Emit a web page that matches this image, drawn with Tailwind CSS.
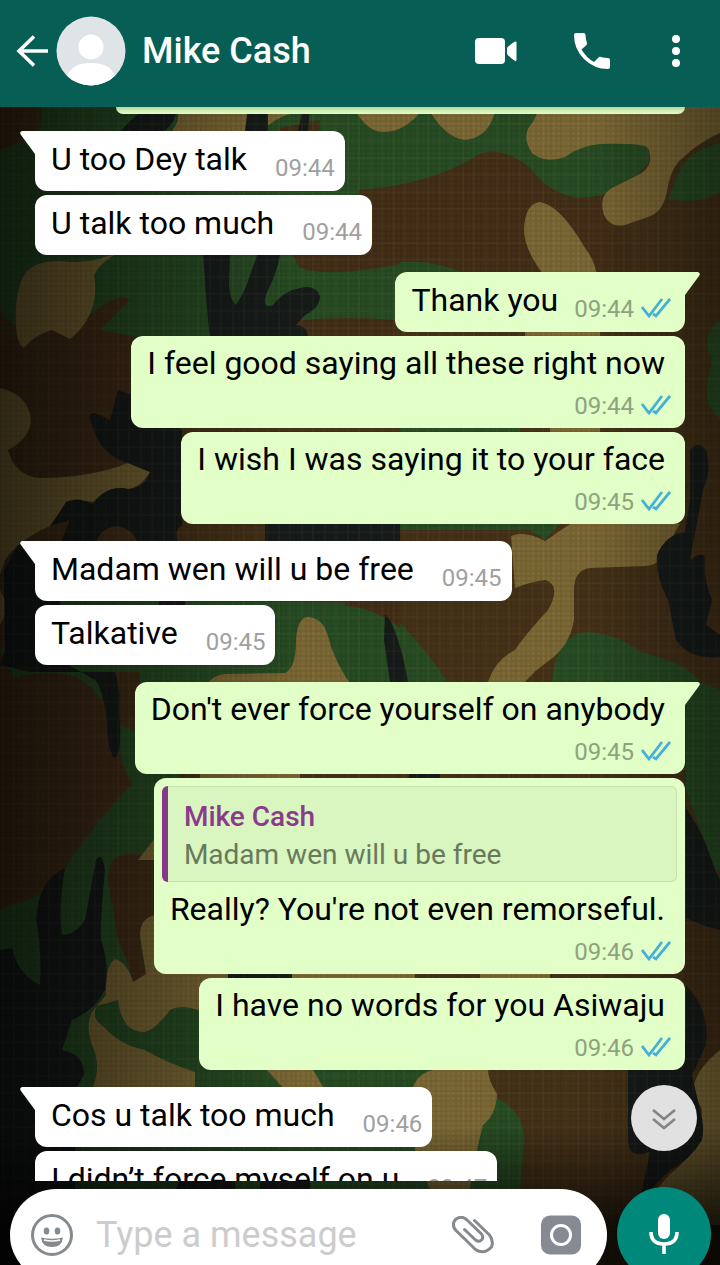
<!DOCTYPE html>
<html lang="en">
<head>
    <meta charset="UTF-8">
    <meta name="viewport" content="width=device-width, initial-scale=1.0">
    <title>Mike Cash</title>
    <script src="https://cdn.jsdelivr.net/npm/@tailwindcss/browser@4"></script>
</head>
<body class="font-[Roboto,sans-serif] bg-[#10180c] text-black">
    <!-- Tick and tail shapes shared by the bubbles -->
    <svg class="hidden">
        <symbol id="ticks" viewBox="0 0 30 22">
            <path d="M1 9 L8 18 L21 1 M12 16 L15 18 L29 1" fill="none" stroke="#45b0d5" stroke-width="2.8"/>
        </symbol>
        <symbol id="tail-in" viewBox="0 0 16 24">
            <path d="M16 0 H3 Q0 1 2 4 L16 23 Z" fill="#fff"/>
        </symbol>
        <symbol id="tail-out" viewBox="0 0 16 24">
            <path d="M0 0 H13 Q16 1 14 4 L0 23 Z" fill="#e1ffc7"/>
        </symbol>
    </svg>

    <div class="h-screen flex flex-col overflow-hidden">
        <header class="h-[107px] shrink-0 bg-[#075e54] flex items-center pl-4 pr-6 pb-[5px] text-white">
            <button aria-label="Back" class="w-10 shrink-0">
                <svg class="w-8 h-8" viewBox="0 0 32 32" fill="none" stroke="#fff" stroke-width="3.6"><path d="M32 16 H3 M18 1.5 L3 16 L18 30.5"/></svg>
            </button>
            <svg class="w-[70px] h-[70px] shrink-0" viewBox="0 0 70 70">
                <defs><clipPath id="face"><circle cx="35" cy="35" r="34.5"/></clipPath></defs>
                <g clip-path="url(#face)">
                    <rect width="70" height="70" fill="#dfe5e7"/>
                    <circle cx="35" cy="31" r="12.5" fill="#fff"/>
                    <path d="M11 60 Q16 47 35 47 Q54 47 59 60 V70 H11 Z" fill="#fff"/>
                </g>
            </svg>
            <h1 class="flex-1 pl-4 text-[36px] leading-10 font-medium">Mike Cash</h1>
            <div class="flex items-center">
                <button aria-label="Video call" class="w-[42px] mr-[57px]">
                    <svg class="w-[42px] h-[26px]" viewBox="0 0 42 26" fill="#fff"><rect width="30" height="26" rx="4"/><path d="M32 10 Q33 8 40 3.5 Q41.500 3 41.500 4.500 V22 Q41.500 23.500 40 23 Q33 18 32 16 Z"/></svg>
                </button>
                <button aria-label="Voice call" class="w-9 mr-[54px]">
                    <svg class="w-9 h-9" viewBox="0 0 36 36" fill="#fff"><path d="M2 0 H9.500 Q11.500 0 11.500 2 Q11.500 6 13 10 Q13 11.500 12 12.500 L7.500 16.500 Q12.500 25 20 29 L24.500 24.500 Q25.500 23.500 27 24 Q30 25 34 25 Q36 25 36 27 V34 Q36 36 34 36 Q20 36 10 26 Q0 16 0 2 Q0 0 2 0 Z"/></svg>
                </button>
                <button aria-label="Menu" class="w-8 flex justify-center">
                    <svg class="w-8 h-8" viewBox="0 0 32 32" fill="#fff"><circle cx="12" cy="4" r="4"/><circle cx="12" cy="16" r="4"/><circle cx="12" cy="28" r="4"/></svg>
                </button>
            </div>
        </header>

        <div class="relative isolate flex-1 min-h-0 flex flex-col">
            <!-- Camouflage wallpaper -->
            <svg class="absolute inset-0 w-full h-full -z-10" viewBox="0 107 720 1158" preserveAspectRatio="xMidYMid slice">
                <defs>
                    <pattern id="weave" width="5" height="5" patternUnits="userSpaceOnUse">
                        <path d="M0 1 H5 M1 0 V5" stroke="#000" stroke-opacity=".09" stroke-width="1.4"/>
                    </pattern>
                    <pattern id="threads" width="23" height="17" patternUnits="userSpaceOnUse">
                        <path d="M3 0 V17 M14 0 V17 M0 5 H23" stroke="#c8b070" stroke-opacity=".05" stroke-width="1.5"/>
                    </pattern>
                    <linearGradient id="side">
                        <stop offset="0" stop-color="#000" stop-opacity=".62"/>
                        <stop offset=".17" stop-color="#000" stop-opacity=".36"/>
                        <stop offset=".42" stop-color="#000" stop-opacity="0"/>
                        <stop offset=".82" stop-color="#000" stop-opacity="0"/>
                        <stop offset="1" stop-color="#000" stop-opacity=".35"/>
                    </linearGradient>
                    <linearGradient id="floor" x1="0" y1="0" x2="0" y2="1">
                        <stop offset=".88" stop-color="#000" stop-opacity="0"/>
                        <stop offset=".97" stop-color="#000" stop-opacity=".75"/>
                    </linearGradient>
                </defs>
                <rect y="107" width="720" height="1158" fill="#453118"/>
                <g fill="#274c23">
                    <path d="M0 107 H720 V143 Q690 150 680 170 L668 199 Q700 205 720 192 V130 L650 143 Q655 165 630 180 Q610 198 575 198 Q545 190 530 168 Q500 145 480 154 Q430 185 360 190 L340 255 L296 262 Q300 275 396 262 Q430 258 470 275 L500 320 L300 320 Q240 330 210 345 L140 345 Q100 320 60 340 Q20 340 0 310 Z"/>
                    <path d="M380 603 Q420 640 448 682 H400 L130 700 L20 690 L0 650 L60 600 Z"/>
                    <path d="M552 682 Q556 632 590 632 Q620 635 640 652 Q690 664 700 682 L720 690 V870 L715 872 Q690 800 686 790 V682 Z"/>
                    <path d="M120 725 Q116 760 132 783 L100 820 Q70 860 40 895 L0 910 V1200 H430 V1060 L280 960 L160 740 Z"/>
                    <path d="M495 1097 Q524 1110 524 1140 L520 1190 H300 V1147 H470 Z M720 320 Q705 330 708 350 L712 360 Q702 400 712 410 L720 420 Z M340 524 L560 524 L545 540 L530 530 L340 530 Z M400 428 H520 V434 H400 Z"/>
                </g>
                <g fill="#432e17">
                    <path d="M0 107 H40 Q44 122 34 138 Q15 144 0 150 Z M290 250 H400 V264 Q330 278 300 268 Z M300 320 Q350 316 396 320 V338 H300 Z"/>
                    <path d="M360 190 Q430 185 470 160 Q500 142 530 168 Q545 190 575 198 Q605 198 630 190 V275 H470 Q430 258 396 262 L340 258 Z"/>
                    <path d="M0 345 L90 315 Q120 290 130 300 L100 330 L180 345 V440 L110 470 L30 478 L0 455 Z"/>
                    <path d="M0 685 Q30 668 70 675 Q98 685 103 710 Q110 755 132 785 Q110 800 90 825 Q75 850 60 878 Q30 895 0 908 Z M115 672 L140 672 V712 Q125 725 118 720 Z M108 880 Q108 853 130 854 H155 V915 Q140 918 140 940 L146 976 L133 982 Q128 960 118 940 Z"/>
                    <path d="M345 600 H400 V628 Q370 606 345 606 Z M280 128 L320 120 V131 H280 Z M686 920 H720 V1070 H686 Z"/>
                </g>
                <g fill="#7c6835">
                    <path d="M178 107 H300 L290 114 Q275 118 262 131 H172 Q180 122 178 107 Z"/>
                    <path d="M355 107 H425 Q405 132 385 132 Q368 133 355 110 Z M427 107 H496 Q490 138 465 140 Q445 138 427 107 Z"/>
                    <path d="M540 107 H720 V133 Q700 142 686 155 Q672 165 668 185 Q665 212 648 217 L625 225 Q610 228 604 215 Q598 196 612 188 L640 174 Q655 165 648 148 Q645 143 600 144 Q580 146 565 157 Q545 164 532 153 Q520 135 533 122 Z"/>
                    <path d="M540 202 Q525 203 524 230 Q524 250 546 278 H597 Q596 262 585 248 Q560 205 540 202 Z M525 330 H600 V340 H525 Z M550 426 H600 V436 H550 Z"/>
                    <path d="M115 252 Q100 262 70 262 Q40 258 26 272 Q14 290 16 325 Q17 345 24 348 Q34 335 52 330 L70 339 Q80 332 88 318 Q98 300 94 275 Q100 262 120 252 Z"/>
                    <path d="M0 388 Q30 395 31 422 Q28 440 8 450 Q15 476 40 478 Q90 478 128 463 L150 472 Q140 488 128 489 Q108 484 95 502 Q80 500 68 502 Q60 515 50 526 Q18 540 5 560 L0 575 Z M0 590 L5 600 V615 L0 625 Z"/>
                    <path d="M511 536 Q525 530 545 541 L570 524 H680 Q672 535 668 550 Q660 565 645 566 L590 568 Q574 570 574 590 V620 Q570 645 550 660 Q535 670 525 682 H488 Q495 660 515 650 Q525 635 548 610 Q562 585 545 580 Q530 582 515 588 Z"/>
                    <path d="M308 617 Q297 618 296 640 Q296 668 285 673 L225 674 Q208 676 206 690 H355 Q335 665 327 633 Q322 618 308 617 Z M200 772 H300 V780 H200 Z"/>
                    <path d="M155 915 Q140 918 140 935 L146 974 L133 982 Q127 962 115 959 Q105 965 106 995 L92 1012 Q85 1025 92 1045 Q102 1065 92 1090 H195 V1072 Q165 1062 145 1050 Q120 1045 105 1028 Q90 1018 97 1006 L118 1000 Q122 1033 145 1032 Q155 1030 170 1010 Q180 1004 198 1010 L230 978 V960 Z M265 1068 H312 L325 1090 H285 Z M138 860 L155 838 V860 Z"/>
                    <path d="M412 1090 Q418 1070 440 1069 H488 Q488 1080 497 1094 Q496 1115 483 1125 Q475 1155 470 1189 H430 L415 1150 Z M290 972 H415 V980 H290 Z M480 972 H550 V980 H480 Z"/>
                    <path d="M720 1050 Q695 1070 693 1090 L702 1110 Q700 1150 675 1170 Q655 1185 640 1225 H720 Z"/>
                </g>
                <g fill="#171c1a">
                    <path d="M138 107 H178 Q175 125 162 132 H120 Q128 122 138 114 Z M248 107 H268 V131 H245 Z M303 107 H310 L308 131 H298 Z"/>
                    <path d="M203 252 H230 L229 285 Q230 300 236 305 Q246 290 250 275 Q255 262 258 252 H281 Q276 275 268 290 Q260 308 272 306 Q285 290 300 288 Q315 284 320 296 Q320 308 305 315 L296 325 Q308 326 308 338 H210 Q206 300 205 280 Z"/>
                    <path d="M118 390 L132 395 L182 430 V545 H18 L4 570 L5 650 L0 665 L30 672 H115 Q121 690 119 710 Q123 755 114 758 Q108 750 107 725 Q104 690 95 680 L60 660 L60 545 L70 520 L50 526 Q58 515 66 502 Q78 496 92 504 Q108 484 128 489 Q145 488 150 472 L128 463 Q100 455 92 425 Q86 412 95 413 L110 420 Z"/>
                    <path d="M265 524 H400 V541 H265 Z M160 600 H185 V606 H158 Z M385 614 Q392 620 398 640 Q406 665 409 690 H391 Q387 660 384 640 Z M410 770 H440 V780 H408 Z"/>
                    <path d="M690 450 Q698 440 706 450 Q712 470 703 490 L690 560 Q700 552 705 556 Q703 580 712 600 L706 625 L720 635 V657 Q690 660 676 640 Q672 620 668 600 Q655 575 657 555 Q665 535 685 532 L690 500 Z"/>
                    <path d="M65 868 Q58 910 62 935 Q75 935 85 920 L96 860 Q102 850 105 870 Q100 920 101 940 Q110 965 105 990 Q95 1010 72 1020 L62 1050 Q85 1055 84 1075 L75 1090 V1265 H0 V950 L12 948 Q18 975 40 985 Q42 950 36 920 Q38 880 65 868 Z"/>
                    <path d="M686 808 Q700 830 705 842 L716 872 L720 880 V930 Q700 925 686 918 Z M686 985 Q710 1010 706 1045 L692 1075 L700 1110 Q705 1125 702 1140 Q690 1160 670 1170 L640 1200 L650 1152 Q628 1160 628 1140 V1060 L686 1040 Z M228 972 H292 V980 H228 Z M180 1181 H235 V1190 H175 Z M260 1181 H310 V1190 H260 Z"/>
                </g>
                <!-- Brown patch between the black fabric and the lower bubbles -->
                <path d="M178 545 Q172 524 190 524 H265 V545 Z M95 545 Q100 527 118 526 Q135 530 138 545 Z" fill="#453118"/>
                <rect y="107" width="720" height="1158" fill="url(#weave)"/>
                <rect y="107" width="720" height="1158" fill="url(#threads)"/>
                <rect y="107" width="720" height="1158" fill="url(#side)"/>
                <rect y="107" width="720" height="1158" fill="url(#floor)"/>
            </svg>

            <main class="flex-1 min-h-0 overflow-hidden px-[35px] flex flex-col gap-[17px]">
                <div class="ml-auto w-[569px] h-[7px] shrink-0 rounded-b-xl bg-linear-to-b from-[#b9d79c] to-[#e1ffc7]"></div>

                <section class="shrink-0 flex flex-col items-start gap-1">
                    <div class="relative h-15 flex bg-white rounded-xl rounded-tl-none py-[9px] pl-4 pr-[10px] gap-7">
                        <svg class="absolute right-full top-0 w-4 h-6"><use href="#tail-in"/></svg>
                        <p class="text-[32px] leading-[38px]">U too Dey talk</p>
                        <time class="self-end text-2xl leading-7 text-[#a0a0a0]">09:44</time>
                    </div>
                    <div class="h-15 flex bg-white rounded-xl py-[9px] pl-4 pr-[10px] gap-7">
                        <p class="text-[32px] leading-[38px]">U talk too much</p>
                        <time class="self-end text-2xl leading-7 text-[#a0a0a0]">09:44</time>
                    </div>
                </section>

                <section class="shrink-0 flex flex-col items-end gap-1">
                    <div class="relative h-15 flex bg-[#e1ffc7] rounded-xl rounded-tr-none py-[9px] pl-4 pr-[14px] gap-4">
                        <svg class="absolute left-full top-0 w-4 h-6"><use href="#tail-out"/></svg>
                        <p class="text-[32px] leading-[38px]">Thank you</p>
                        <div class="self-end flex items-center gap-[7px]"><time class="text-2xl leading-7 text-[#8fa27f]">09:44</time><svg class="w-[30px] h-[22px]"><use href="#ticks"/></svg></div>
                    </div>
                    <div class="flex flex-col gap-[10px] bg-[#e1ffc7] rounded-xl py-2 pl-4 pr-[14px]">
                        <p class="text-[32px] leading-[38px] pr-[6px]">I feel good saying all these right now</p>
                        <div class="self-end flex items-center gap-[7px]"><time class="text-2xl leading-7 text-[#8fa27f]">09:44</time><svg class="w-[30px] h-[22px]"><use href="#ticks"/></svg></div>
                    </div>
                    <div class="flex flex-col gap-[10px] bg-[#e1ffc7] rounded-xl py-2 pl-4 pr-[14px]">
                        <p class="text-[32px] leading-[38px] pr-[6px]">I wish I was saying it to your face</p>
                        <div class="self-end flex items-center gap-[7px]"><time class="text-2xl leading-7 text-[#8fa27f]">09:45</time><svg class="w-[30px] h-[22px]"><use href="#ticks"/></svg></div>
                    </div>
                </section>

                <section class="shrink-0 flex flex-col items-start gap-1">
                    <div class="relative h-15 flex bg-white rounded-xl rounded-tl-none py-[9px] pl-4 pr-[10px] gap-7">
                        <svg class="absolute right-full top-0 w-4 h-6"><use href="#tail-in"/></svg>
                        <p class="text-[32px] leading-[38px]">Madam wen will u be free</p>
                        <time class="self-end text-2xl leading-7 text-[#a0a0a0]">09:45</time>
                    </div>
                    <div class="h-15 flex bg-white rounded-xl py-[9px] pl-4 pr-[10px] gap-7">
                        <p class="text-[32px] leading-[38px]">Talkative</p>
                        <time class="self-end text-2xl leading-7 text-[#a0a0a0]">09:45</time>
                    </div>
                </section>

                <section class="shrink-0 flex flex-col items-end gap-1">
                    <div class="relative flex flex-col gap-[10px] bg-[#e1ffc7] rounded-xl rounded-tr-none py-2 pl-4 pr-[14px]">
                        <svg class="absolute left-full top-0 w-4 h-6"><use href="#tail-out"/></svg>
                        <p class="text-[32px] leading-[38px] pr-[6px]">Don't ever force yourself on anybody</p>
                        <div class="self-end flex items-center gap-[7px]"><time class="text-2xl leading-7 text-[#8fa27f]">09:45</time><svg class="w-[30px] h-[22px]"><use href="#ticks"/></svg></div>
                    </div>
                    <div class="bg-[#e1ffc7] rounded-xl py-2">
                        <blockquote class="mx-2 mb-2 flex rounded-md overflow-hidden bg-[#d9f5c0] shadow-[inset_0_0_0_1px_#c6e3af]">
                            <div class="w-[6px] bg-[#843a86]"></div>
                            <div class="pt-3 pb-2 pl-4 text-[28px] leading-[38px]">
                                <p class="font-medium text-[#8a3c8a]">Mike Cash</p>
                                <p class="text-[#68795c]">Madam wen will u be free</p>
                            </div>
                        </blockquote>
                        <div class="flex flex-col gap-[10px] pl-4 pr-[14px]">
                            <p class="text-[32px] leading-[38px] pr-[6px]">Really? You're not even remorseful.</p>
                            <div class="self-end flex items-center gap-[7px]"><time class="text-2xl leading-7 text-[#8fa27f]">09:46</time><svg class="w-[30px] h-[22px]"><use href="#ticks"/></svg></div>
                        </div>
                    </div>
                    <div class="flex flex-col gap-[10px] bg-[#e1ffc7] rounded-xl py-2 pl-4 pr-[14px]">
                        <p class="text-[32px] leading-[38px] pr-[6px]">I have no words for you Asiwaju</p>
                        <div class="self-end flex items-center gap-[7px]"><time class="text-2xl leading-7 text-[#8fa27f]">09:46</time><svg class="w-[30px] h-[22px]"><use href="#ticks"/></svg></div>
                    </div>
                </section>

                <section class="shrink-0 flex flex-col items-start gap-1">
                    <div class="relative h-15 flex bg-white rounded-xl rounded-tl-none py-[9px] pl-4 pr-[10px] gap-7">
                        <svg class="absolute right-full top-0 w-4 h-6"><use href="#tail-in"/></svg>
                        <p class="text-[32px] leading-[38px]">Cos u talk too much</p>
                        <time class="self-end text-2xl leading-7 text-[#a0a0a0]">09:46</time>
                    </div>
                    <div class="h-15 flex bg-white rounded-xl py-[9px] pl-4 pr-[10px] gap-7">
                        <p class="text-[32px] leading-[38px]">I didn’t force myself on u</p>
                        <time class="self-end text-2xl leading-7 text-[#a0a0a0]">09:47</time>
                    </div>
                </section>
            </main>

            <button aria-label="Scroll to bottom" class="absolute right-[23px] bottom-[114px] w-[66px] h-[66px] rounded-full bg-[#e1e1e1] flex items-center justify-center">
                <svg class="w-6 h-6" viewBox="0 0 24 24" fill="none" stroke="#858585" stroke-width="2.6"><path d="M1 4 L12 13 L23 4 M1 13 L12 22 L23 13"/></svg>
            </button>

            <footer class="h-[84px] shrink-0 overflow-hidden flex items-start pl-[10px] pr-[9px] pt-[6px] gap-[10px]">
                <div class="mt-0.5 flex-1 min-w-0 h-[92px] rounded-full bg-white flex items-center pl-5 pr-[26px]">
                    <button aria-label="Emoji" class="shrink-0">
                        <svg class="w-11 h-11" viewBox="0 0 44 44">
                            <circle cx="22" cy="22" r="19.500" fill="none" stroke="#858a8f" stroke-width="3"/>
                            <ellipse cx="16.500" cy="18" rx="2.800" ry="3.600" fill="#858a8f"/><ellipse cx="27.500" cy="18" rx="2.800" ry="3.600" fill="#858a8f"/>
                            <path d="M11 24.500 Q22 27 33 24.500 Q32 34 22 34 Q12 34 11 24.500 Z" fill="#858a8f"/><path d="M14 27 Q22 29 30 27" fill="none" stroke="#fff" stroke-width="1.600"/>
                        </svg>
                    </button>
                    <input type="text" aria-label="Message" placeholder="Type a message" class="flex-1 min-w-0 ml-[22px] h-12 text-[36px] outline-none placeholder:text-[#cccccc]">
                    <button aria-label="Attach" class="shrink-0 mr-[47px]">
                        <svg class="w-[42px] h-[38px]" viewBox="0 0 42 38" fill="none" stroke="#858a8f" stroke-width="3" stroke-linecap="round" stroke-linejoin="round"><path d="M22.500 4.500 L37.500 19 Q42 25 39.500 31 Q32 39 23.500 33.500 L4 14.500 Q-1 9 3.500 3.500 Q9 -1 14.500 3.500 L29.500 18 Q32 21.500 29.500 24 Q27 26.500 23.500 24 L12.500 13.500"/></svg>
                    </button>
                    <button aria-label="Camera" class="shrink-0">
                        <svg class="w-10 h-10" viewBox="0 0 40 40"><rect y=".5" width="40" height="39" rx="9" fill="#858a93"/><circle cx="20" cy="20" r="9.500" fill="none" stroke="#fff" stroke-width="3"/></svg>
                    </button>
                </div>
                <button aria-label="Voice message" class="shrink-0 w-[94px] h-[94px] rounded-full bg-[#00897b] flex items-center justify-center">
                    <svg class="w-[30px] h-10" viewBox="0 0 30 40"><rect x="9" width="12" height="25" rx="6" fill="#fff"/><path d="M2 18 Q2 30 15 30 Q28 30 28 18 M15 30 V40" fill="none" stroke="#fff" stroke-width="3.600"/></svg>
                </button>
            </footer>
        </div>
    </div>
</body>
</html>
